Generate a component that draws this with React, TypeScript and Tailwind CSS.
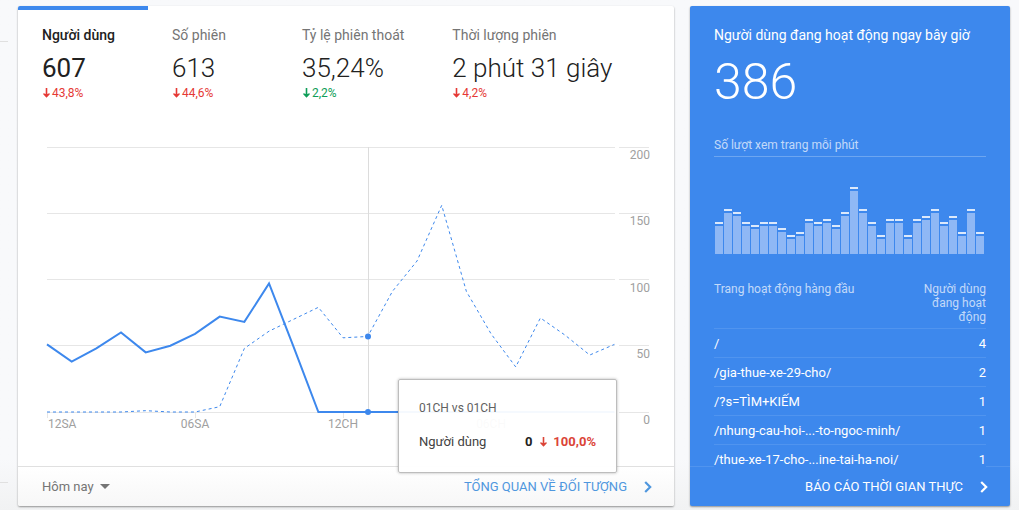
import React from "react";

type Metric = { label: string; value: string; change: string; good?: boolean };

const metrics: Metric[] = [
  { label: "Người dùng", value: "607", change: "43,8%" },
  { label: "Số phiên", value: "613", change: "44,6%" },
  { label: "Tỷ lệ phiên thoát", value: "35,24%", change: "2,2%", good: true },
  { label: "Thời lượng phiên", value: "2 phút 31 giây", change: "4,2%" },
];

const today = [
  51, 38, 48, 60, 45, 50, 59, 72, 68, 97, 49, 0, 0, 0, 0, 0, 0, 0, 0, 0, 0, 0, 0, 0,
];
const previous = [
  0, 0, 0, 0, 1, 0, 0, 4, 48, 61, 70, 79, 56, 57, 91, 114, 156, 91, 59, 34, 71, 58, 43, 51,
];
const ticks = [200, 150, 100, 50, 0];
const hours = [
  { hour: 0, label: "12SA" },
  { hour: 6, label: "06SA" },
  { hour: 12, label: "12CH" },
  { hour: 18, label: "06CH" },
];

const pageviews = [
  32, 45, 42, 32, 29, 32, 32, 26, 19, 22, 35, 32, 35, 29, 42, 67, 45, 32, 19, 35, 35, 19, 35, 38,
  45, 32, 38, 22, 45, 22,
];

const pages = [
  { path: "/", users: 4 },
  { path: "/gia-thue-xe-29-cho/", users: 2 },
  { path: "/?s=TÌM+KIẾM", users: 1 },
  { path: "/nhung-cau-hoi-...-to-ngoc-minh/", users: 1 },
  { path: "/thue-xe-17-cho-...ine-tai-ha-noi/", users: 1 },
];

const px = (hour: number) => 29 + hour * 24.67;
const py = (value: number) => 275 - value * 1.325;
const toPoints = (values: number[]) => values.map((v, i) => `${px(i)},${py(v)}`).join(" ");

function DownArrow({ className }: { className: string }) {
  return (
    <svg viewBox="0 0 7 10" className={className} fill="currentColor" aria-hidden="true">
      <path d="M2.7 0h1.6v6L6.2 5.2 7 6 3.5 9.8 0 6l.8-.8 1.9.8z" />
    </svg>
  );
}

function Chevron() {
  return (
    <svg viewBox="0 0 8 12" className="h-3 w-2" fill="none" stroke="currentColor" strokeWidth="2.2" aria-hidden="true">
      <path d="M1.2 1l5 5-5 5" />
    </svg>
  );
}

function MetricTab({ metric, active }: { metric: Metric; active: boolean }) {
  return (
    <button
      type="button"
      role="tab"
      aria-selected={active}
      className={`flex min-w-[130px] flex-col items-start whitespace-nowrap border-t-4 px-6 pt-[15px] text-left ${
        active ? "border-[#3d88ed]" : "border-transparent"
      }`}
    >
      <span className={`text-sm leading-5 ${active ? "font-medium text-[#212121]" : "text-[#757575]"}`}>
        {metric.label}
      </span>
      <span className={`pt-[7px] text-[26px] leading-8 text-[#212121] ${active ? "font-normal" : "font-light"}`}>
        {metric.value}
      </span>
      <span
        className={`flex items-center gap-0.5 pl-px pt-px text-xs leading-4 ${
          metric.good ? "text-[#0f9d58]" : "text-[#e53935]"
        }`}
      >
        <DownArrow className="h-2.5 w-[7px]" />
        <span>{metric.change}</span>
      </span>
    </button>
  );
}

function UsersChart() {
  return (
    <svg viewBox="0 0 656 328" className="block h-auto w-full" role="img" aria-label="Người dùng">
      <g stroke="#e6e6e6">
        {ticks.map((t) => {
          const y = Math.floor(py(t)) + 0.5;
          return <path key={t} d={`M29 ${y}H597M601 ${y}H631`} />;
        })}
        {hours.map((h) => (
          <path key={h.hour} d={`M${Math.floor(px(h.hour)) + 0.5} 276v5`} />
        ))}
        <path d="M350.5 10V275" stroke="#dcdcdc" />
      </g>
      <g fontSize="12" fill="#a0a0a0" fontFamily="Roboto, sans-serif">
        {ticks.map((t) => (
          <text key={t} x="632" y={Math.round(py(t)) + 12} textAnchor="end">
            {t}
          </text>
        ))}
        <text x="30" y="291">{hours[0].label}</text>
        {hours.slice(1).map((h) => (
          <text key={h.hour} x={px(h.hour)} y="291" textAnchor="middle">
            {h.label}
          </text>
        ))}
      </g>
      <polyline points={toPoints(previous)} fill="none" stroke="#3d88ed" strokeWidth="1" strokeDasharray="3 3" />
      <polyline points={toPoints(today)} fill="none" stroke="#3d88ed" strokeWidth="2" />
      <circle cx="350" cy={py(57)} r="3" fill="#3d88ed" />
      <circle cx="350" cy={py(0)} r="3" fill="#3d88ed" />
    </svg>
  );
}

function ChartTooltip() {
  return (
    <div
      role="tooltip"
      className="absolute bottom-[-7px] right-[57px] w-[219px] rounded-xs border border-[#bdbdbd] bg-white/95 px-5 pb-5 pt-[18px] shadow-[0_0_3px_rgba(0,0,0,0.3)]"
    >
      <div className="text-xs leading-5 text-[#616161]">01CH vs 01CH</div>
      <div className="flex items-center pt-3.5 text-[13px] leading-5">
        <span className="flex-1 text-[#424242]">Người dùng</span>
        <span className="font-bold text-[#212121]">0</span>
        <span className="flex items-center gap-1.5 pl-2 font-bold text-[#db4437]">
          <DownArrow className="h-2.5 w-[7px]" />
          100,0%
        </span>
      </div>
    </div>
  );
}

function PageviewBars() {
  return (
    <svg viewBox="0 0 272 67" className="block h-auto w-full" role="img" aria-label="Số lượt xem trang mỗi phút">
      {pageviews.map((h, i) => (
        <g key={i}>
          <rect x={1 + i * 9} y={67 - h} width="8" height="2" fill="#dce9fb" />
          <rect x={1 + i * 9} y={71 - h} width="8" height={h - 4} fill="#8fb8f5" />
        </g>
      ))}
    </svg>
  );
}

export default function App() {
  return (
    <div className="flex min-h-screen bg-linear-to-b from-[#f8f9fb] from-90% to-[#f1f2f3] pb-1 pr-[9px] pt-1.5 font-['Roboto',sans-serif]">
      <div className="mr-2.5 flex w-2 shrink-0 flex-col justify-between pb-[23px] pt-[35px]" aria-hidden="true">
        <span className="h-px bg-[#e0e0e0]" />
        <span className="h-px bg-[#e0e0e0]" />
      </div>

      <main className="flex min-w-0 flex-1 items-stretch gap-4">
        <section className="flex min-w-0 flex-1 flex-col rounded-xs bg-white shadow-[0_1px_2px_rgba(0,0,0,0.4)]">
          <div role="tablist" className="flex overflow-hidden rounded-t-xs">
            {metrics.map((m, i) => (
              <MetricTab key={m.label} metric={m} active={i === 0} />
            ))}
          </div>
          <div className="relative flex-1 pt-9">
            <UsersChart />
            <ChartTooltip />
          </div>
          <footer className="flex h-10 items-center justify-between rounded-b-xs border-t border-[#e0e0e0] bg-linear-to-b from-white to-[#f7f7f7] pl-6 pr-[22px]">
            <label className="flex items-center gap-1.5 text-[#757575]">
              <select aria-label="Khoảng thời gian" className="appearance-none bg-transparent text-[13px] leading-5">
                <option>Hôm nay</option>
              </select>
              <svg viewBox="0 0 10 5" className="h-[5px] w-2.5" fill="currentColor" aria-hidden="true">
                <path d="M0 0h10L5 5z" />
              </svg>
            </label>
            <a href="#audience" className="flex items-center gap-[17px] text-[13px] leading-5 text-[#4f97de]">
              TỔNG QUAN VỀ ĐỐI TƯỢNG
              <Chevron />
            </a>
          </footer>
        </section>

        <section className="flex w-[320px] shrink-0 flex-col rounded-xs bg-[#3d88ed] text-white shadow-[0_1px_2px_rgba(0,0,0,0.4)]">
          <div className="flex flex-1 flex-col px-6 pt-[19px]">
            <h2 className="whitespace-nowrap text-sm leading-5">Người dùng đang hoạt động ngay bây giờ</h2>
            <div className="pt-[9px] text-[50px] font-light leading-[56px]">386</div>
            <h3 className="mt-[27px] border-b border-white/25 pb-[3px] text-xs leading-4 text-white/70">
              Số lượt xem trang mỗi phút
            </h3>
            <div className="pt-[30px]">
              <PageviewBars />
            </div>
            <table className="-mb-1 mt-7 w-full text-[13px]">
              <thead>
                <tr className="border-b border-white/10 align-top text-xs leading-[14px] text-white/70">
                  <th scope="col" className="pb-1 text-left font-normal">Trang hoạt động hàng đầu</th>
                  <th scope="col" className="w-[68px] pb-1 text-right font-normal">Người dùng đang hoạt động</th>
                </tr>
              </thead>
              <tbody>
                {pages.map((p) => (
                  <tr key={p.path} className="h-[29px] border-b border-white/10 align-top last:h-[25px] last:border-none">
                    <td className="pt-[5px] leading-5">{p.path}</td>
                    <td className="pt-[5px] text-right leading-5">{p.users}</td>
                  </tr>
                ))}
              </tbody>
            </table>
          </div>
          <div className="flex justify-between" aria-hidden="true">
            <span className="h-px w-6 bg-white/10" />
            <span className="h-px w-6 bg-white/10" />
          </div>
          <footer className="flex h-[39px] items-center justify-end pr-[22px]">
            <a href="#realtime" className="flex items-center gap-[17px] text-[13px] leading-5">
              BÁO CÁO THỜI GIAN THỰC
              <Chevron />
            </a>
          </footer>
        </section>
      </main>
    </div>
  );
}
